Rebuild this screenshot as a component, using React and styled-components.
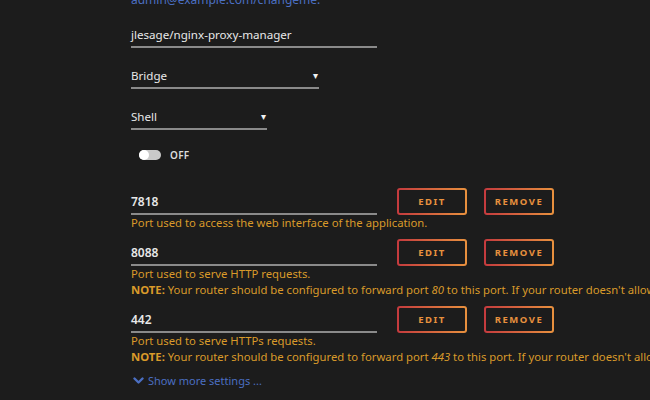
import React from 'react';
import styled, { createGlobalStyle } from 'styled-components';

const GlobalStyle = createGlobalStyle`
    html, body {
        margin: 0;
        padding: 0;
        background: #1c1c1c;
        overflow: hidden;
    }
    body {
        font-family: "Noto Sans", "Open Sans", sans-serif;
    }
`;

const ports = [
    { value: '7818', help: 'Port used to access the web interface of the application.' },
    { value: '8088', help: 'Port used to serve HTTP requests.', forward: '80' },
    { value: '442', help: 'Port used to serve HTTPs requests.', forward: '443' }
];

function App() {
    return (
        <Page>
            <GlobalStyle />
            <TopText>admin@example.com/changeme.</TopText>
            <TextField width={246}>jlesage/nginx-proxy-manager</TextField>
            <Select width={188}>Bridge<Arrow>▾</Arrow></Select>
            <Select width={136}>Shell<Arrow>▾</Arrow></Select>
            <ToggleRow>
                <Track><Knob /></Track>
                <ToggleLabel>OFF</ToggleLabel>
            </ToggleRow>
            {ports.map((p, i) => (
                <PortBlock key={p.value} first={i === 0}>
                    <PortRow>
                        <TextField width={246} bold>{p.value}</TextField>
                        <Actions>
                            <OutlineButton>EDIT</OutlineButton>
                            <OutlineButton>REMOVE</OutlineButton>
                        </Actions>
                    </PortRow>
                    <Help>{p.help}</Help>
                    {p.forward && (
                        <Help>
                            <b>NOTE:</b> Your router should be configured to forward port <i>{p.forward}</i> to this port. If your router doesn't allow
                        </Help>
                    )}
                </PortBlock>
            ))}
            <MoreLink>
                <svg width="11" height="8" viewBox="0 0 11 8">
                    <path d="M1.5 1.5 L5.5 5.5 L9.5 1.5" fill="none" stroke="#4b6fc2" strokeWidth="2.4" strokeLinecap="round" strokeLinejoin="round" />
                </svg>
                Show more settings ...
            </MoreLink>
        </Page>
    );
}

export default App;

const Page = styled.div`
    width: 650px;
    height: 400px;
    padding-left: 131px;
    box-sizing: border-box;
    overflow: hidden;
`;

const TopText = styled.div`
    margin-top: -7px;
    height: 13px;
    line-height: 13px;
    font-size: 12px;
    color: #4b6fc2;
    white-space: nowrap;
`;

const TextField = styled.div`
    width: ${props => props.width}px;
    height: 23px;
    line-height: 23px;
    margin-top: ${props => props.bold ? 0 : 17}px;
    border-bottom: 2px solid #8a8a8a;
    font-size: ${props => props.bold ? 12 : 11.6}px;
    font-weight: ${props => props.bold ? 600 : 400};
    color: #e8e8e8;
    white-space: nowrap;
`;

const Select = styled(TextField)`
    margin-top: 16px;
    display: flex;
    justify-content: space-between;
    align-items: center;
`;

const Arrow = styled.span`
    font-size: 10px;
    color: #f2f2f2;
    margin-right: 1px;
`;

const ToggleRow = styled.div`
    display: flex;
    align-items: center;
    height: 14px;
    margin-top: 18px;
    margin-left: 8px;
`;

const Track = styled.div`
    position: relative;
    width: 22px;
    height: 10px;
    border-radius: 5px;
    background: #c9c9c9;
`;

const Knob = styled.div`
    position: absolute;
    left: 0;
    top: 0;
    width: 10px;
    height: 10px;
    border-radius: 50%;
    background: #ffffff;
`;

const ToggleLabel = styled.span`
    margin-left: 9px;
    font-size: 10px;
    font-weight: 600;
    color: #dcdcdc;
    letter-spacing: 0.3px;
`;

const PortBlock = styled.div`
    margin-top: ${props => props.first ? 26 : 8}px;
`;

const PortRow = styled.div`
    display: flex;
    align-items: flex-end;
    height: 27px;
`;

const Actions = styled.div`
    display: flex;
    gap: 17px;
    margin-left: 20px;
`;

const OutlineButton = styled.button`
    width: 70px;
    height: 27px;
    padding: 0;
    border: 2px solid transparent;
    border-radius: 3px;
    background:
        linear-gradient(#1c1c1c, #1c1c1c) padding-box,
        linear-gradient(90deg, #c43a3e, #e8913e) border-box;
    color: #e8913e;
    font-family: "Noto Sans", sans-serif;
    font-size: 9.5px;
    font-weight: 700;
    letter-spacing: 1.5px;
`;

const Help = styled.div`
    line-height: 16px;
    font-size: 11.3px;
    color: #d99a2a;
    white-space: nowrap;

    b {
        font-weight: 700;
    }
`;

const MoreLink = styled.div`
    display: flex;
    align-items: center;
    gap: 4px;
    margin-top: 8px;
    margin-left: 2px;
    line-height: 16px;
    font-size: 11px;
    color: #4b6fc2;
`;
